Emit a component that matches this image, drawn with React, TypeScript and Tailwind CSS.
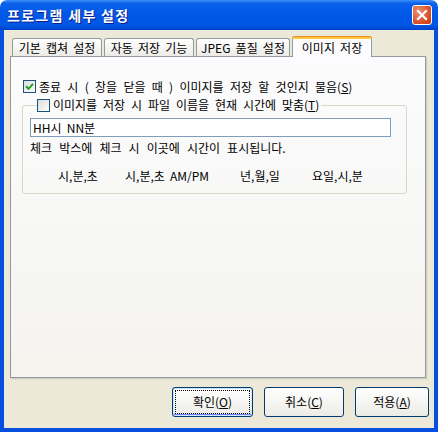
import React from 'react';

const font = "font-['Noto_Sans_CJK_KR','Noto_Sans',sans-serif]";

function CheckBox({ checked }: { checked?: boolean }) {
  return (
    <span className="w-[13px] h-[13px] border border-[#1C5180] bg-linear-to-br from-[#DCDCD7] to-white flex items-center justify-center shrink-0">
      {checked && (
        <svg width="9" height="9" viewBox="0 0 9 9">
          <path d="M1 4.2 L3.5 6.8 L8 1.8" stroke="#21A121" strokeWidth="2" fill="none" />
        </svg>
      )}
    </span>
  );
}

function Tab({ label, active, w }: { label: string; active?: boolean; w: string }) {
  if (active) {
    return (
      <div className={`${w} relative z-10 -mb-px h-[21px] bg-[#FCFCFE] border-x border-[#919B9C] rounded-t-[3px] flex flex-col`}>
        <div className="h-[3px] bg-[#FFC83C] border-t border-[#E68B2C] rounded-t-[3px] -mx-px" />
        <div className="flex-1 flex items-center justify-center text-[12px] text-black">{label}</div>
      </div>
    );
  }
  return (
    <div className={`${w} h-[18px] bg-linear-to-b from-white to-[#ECEBE6] border border-b-0 border-[#919B9C] rounded-t-[3px] flex items-center justify-center text-[12px] text-black`}>
      {label}
    </div>
  );
}

function Button({ label, k, w, focused }: { label: string; k: string; w: string; focused?: boolean }) {
  const [before, after] = label.split(k);
  return (
    <button
      className={`${w} h-[30px] rounded-[3px] border border-[#003C74] bg-linear-to-b from-white to-[#ECEBE6] text-[12px] text-black p-[2px] ${focused ? 'shadow-[inset_0_0_0_1px_#CEE7FF,inset_0_-1px_0_1px_#6982EE]' : ''}`}
    >
      <span className={`w-full h-full flex items-center justify-center ${focused ? 'outline outline-1 outline-dotted outline-[#000] -outline-offset-1' : ''}`}>
        {before}
        <span className="underline">{k}</span>
        {after}
      </span>
    </button>
  );
}

export default function App() {
  return (
    <div className={`w-[438px] h-[432px] flex flex-col ${font} [word-spacing:2.5px]`}>
      {/* Title bar */}
      <div className="h-[30px] rounded-t-[7px] bg-[linear-gradient(to_bottom,#3D8EF8_0%,#0A60EA_12%,#0058E8_50%,#0256E4_85%,#0040C8_100%)] flex items-center justify-between pl-[7px] pr-[6px]">
        <span className="text-white font-bold text-[14px] tracking-[1.3px] [text-shadow:1px_1px_0_#0A1E8C] [word-spacing:0px]">프로그램 세부 설정</span>
        <span className="w-[20px] h-[20px] rounded-[3px] border border-white bg-[radial-gradient(circle_at_30%_30%,#F08C6E,#D64A22_70%,#C03A14)] flex items-center justify-center">
          <svg width="12" height="12" viewBox="0 0 12 12">
            <path d="M2 2 L10 10 M10 2 L2 10" stroke="white" strokeWidth="2.2" strokeLinecap="square" />
          </svg>
        </span>
      </div>

      {/* Body */}
      <div className="flex-1 bg-[#ECE9D8] border-x-4 border-b-4 border-[#0550DE] flex flex-col">
        <div className="pt-[7px] pl-[6px] flex flex-col">
          <div className="flex items-end h-[19px] pl-[2px] gap-[2px]">
            <Tab label="기본 캡쳐 설정" w="w-[90px]" />
            <Tab label="자동 저장 기능" w="w-[90px]" />
            <Tab label="JPEG 품질 설정" w="w-[94px]" />
            <Tab label="이미지 저장" w="w-[80px]" active />
          </div>
          <div className="w-[416px] h-[322px] border border-[#919B9C] bg-linear-to-b from-[#FCFCFE] to-[#F4F3EE] shadow-[1px_1px_0_#D0CEBF,2px_2px_0_#E3E0D0] pt-[23px] pl-[12px] text-[12px] text-black">
            <div className="flex items-center gap-[3px] h-[13px]">
              <CheckBox checked />
              <span className="[word-spacing:3.6px]">
                종료 시 ( 창을 닫을 때 ) 이미지를 저장 할 것인지 물음(<span className="underline">S</span>)
              </span>
            </div>
            <fieldset className="mt-[3px] w-[385px] h-[98px] border border-[#D8D8C8] rounded-[3px] pl-[7px] -ml-[1px]">
              <legend className="ml-[7px] pr-[2px] flex items-center gap-[3px]">
                <CheckBox />
                <span className="[word-spacing:3.2px]">
                  이미지를 저장 시 파일 이름을 현재 시간에 맞춤(<span className="underline">T</span>)
                </span>
              </legend>
              <div className="mt-[4px] w-[361px] h-[19px] border border-[#7F9DB9] bg-white flex items-center pl-[2px]">
                HH시 NN분
              </div>
              <div className="mt-[2px] h-[18px] flex items-center [word-spacing:4.4px]">체크 박스에 체크 시 이곳에 시간이 표시됩니다.</div>
              <div className="mt-[10px] h-[18px] flex items-center pl-[28px]">
                <span className="w-[67px]">시,분,초</span>
                <span className="w-[115px]">시,분,초 AM/PM</span>
                <span className="w-[72px]">년,월,일</span>
                <span>요일,시,분</span>
              </div>
            </fieldset>
          </div>
        </div>
        <div className="mt-[9px] flex justify-end pr-[5px] gap-[11px]">
          <Button label="확인(O)" k="O" w="w-[81px]" focused />
          <Button label="취소(C)" k="C" w="w-[80px]" />
          <Button label="적용(A)" k="A" w="w-[74px]" />
        </div>
      </div>
    </div>
  );
}
